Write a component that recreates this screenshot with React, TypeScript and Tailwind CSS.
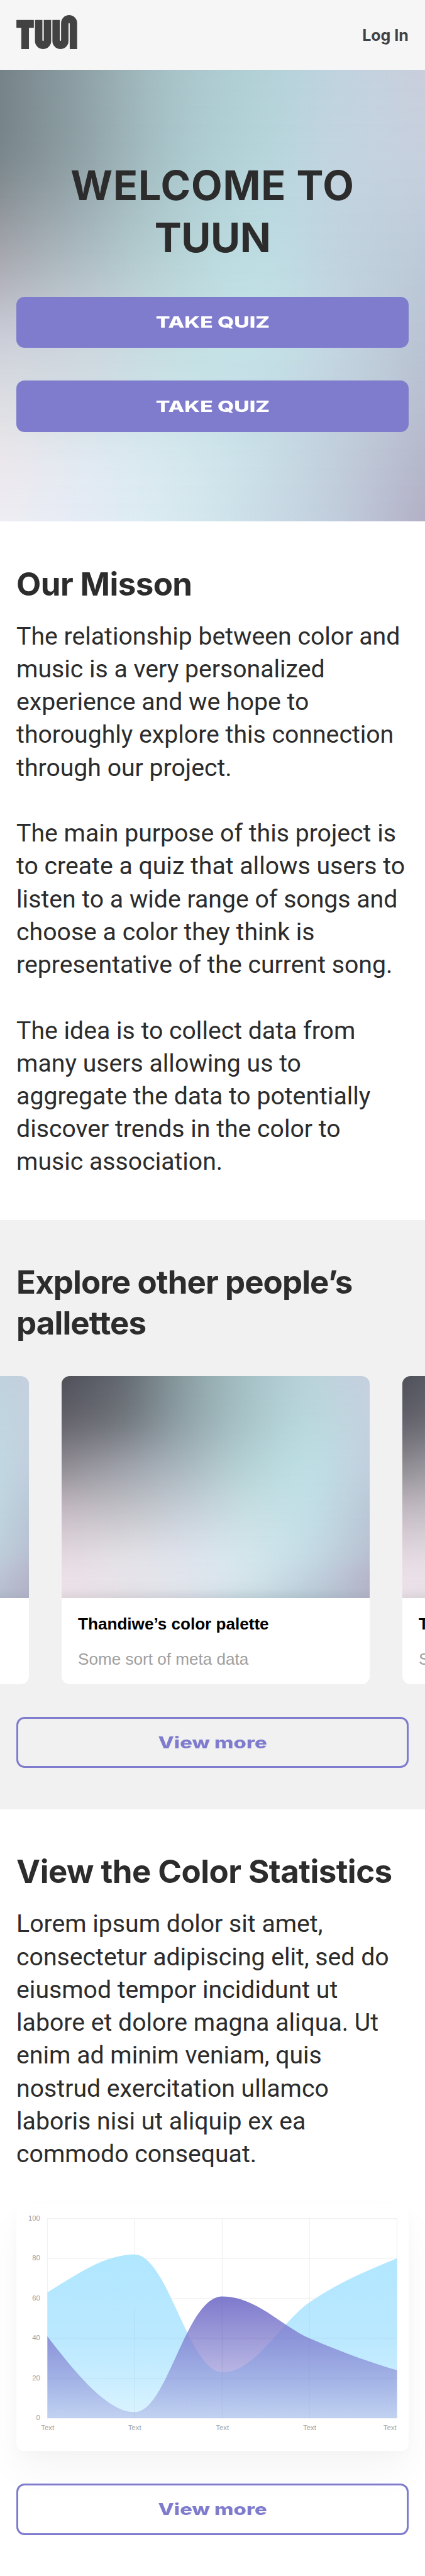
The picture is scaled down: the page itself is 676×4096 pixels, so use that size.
import React from "react";

type MeshRow = { at: number; colors: string[] };
type Rgb = number[];

const heroMesh: MeshRow[] = [
  { at: 0, colors: ["#768389", "#8fa2a7", "#a7c2c7", "#b2d0d6", "#c0d3df", "#cacedc"] },
  { at: 20, colors: ["#7c888d", "#93a5aa", "#a9c5ca", "#b5d4da", "#c2d4e0", "#c6cfdd"] },
  { at: 40, colors: ["#a4a5ad", "#abbbc1", "#b6d1d5", "#bddce2", "#c0d3df", "#becad9"] },
  { at: 60, colors: ["#ccced8", "#cbd5dc", "#c5dde1", "#c3e1e6", "#c2d4e0", "#b9c3d3"] },
  { at: 75, colors: ["#dedfe3", "#d3dfe5", "#cbe3e8", "#c5dde6", "#c1d1de", "#b8becf"] },
  { at: 87, colors: ["#ebe7ec", "#e1e9f1", "#d6e8ee", "#cadfe7", "#c1cddb", "#b5b7cb"] },
  { at: 100, colors: ["#eeedf2", "#e4ebf5", "#d8eaf0", "#cbdde7", "#c0cbdb", "#b3b0c6"] },
];

const cardMesh: MeshRow[] = [
  { at: 0, colors: ["#4f5059", "#656b73", "#8a9da1", "#a5c0c5", "#b9d2d9", "#c5d0df"] },
  { at: 20, colors: ["#65636d", "#747980", "#91a3a9", "#a9c4c9", "#b9d7dc", "#c4d1df"] },
  { at: 40, colors: ["#8f8b92", "#9c9fa8", "#a9b7be", "#b5d1d5", "#bddde3", "#c2cfde"] },
  { at: 60, colors: ["#c2b8c1", "#c1c1c7", "#c5ced6", "#c6dde1", "#c2dee6", "#bbc8d7"] },
  { at: 80, colors: ["#e2d6de", "#e0dee3", "#dce1ea", "#d2e5eb", "#c4dae4", "#b8c0d1"] },
  { at: 90, colors: ["#ebdfe7", "#e6e3e9", "#e0e4ec", "#d3e4ea", "#c1d2df", "#b6b6ca"] },
  { at: 96, colors: ["#ebdfe7", "#e3e0e5", "#dde1e9", "#cedee5", "#bccdd9", "#b3b3c8"] },
  { at: 100, colors: ["#ddd3da", "#d5d2d7", "#cdd1db", "#bdced6", "#aebfcb", "#abacc1"] },
];

const toRgb = (hex: string): Rgb => [1, 3, 5].map((i) => parseInt(hex.slice(i, i + 2), 16));
const toCss = (c: Rgb) =>
  `rgb(${c.map((v) => Math.max(0, Math.min(255, v)).toFixed(1)).join(" ")})`;

/* Cubic Hermite interpolation through unevenly spaced colour stops. */
function sample(stops: number[], values: Rgb[], at: number): Rgb {
  const last = stops.length - 1;
  let i = 0;
  while (i < last - 1 && at > stops[i + 1]) i++;
  const span = stops[i + 1] - stops[i];
  const t = (at - stops[i]) / span;
  const slope = (k: number, ch: number) => {
    const a = Math.max(0, k - 1);
    const b = Math.min(last, k + 1);
    return (values[b][ch] - values[a][ch]) / (stops[b] - stops[a]);
  };
  return [0, 1, 2].map((ch) => {
    const p0 = values[i][ch];
    const p1 = values[i + 1][ch];
    const m0 = slope(i, ch) * span;
    const m1 = slope(i + 1, ch) * span;
    const t2 = t * t;
    const t3 = t2 * t;
    return (
      (2 * t3 - 3 * t2 + 1) * p0 + (t3 - 2 * t2 + t) * m0 + (-2 * t3 + 3 * t2) * p1 + (t3 - t2) * m1
    );
  });
}

function smooth(rows: MeshRow[], rowCount: number, columnCount: number) {
  const ys = rows.map((r) => r.at);
  const grid = rows.map((r) => r.colors.map(toRgb));
  const xs = rows[0].colors.map((_, i) => (100 * i) / (rows[0].colors.length - 1));
  return Array.from({ length: rowCount }, (_, r) => {
    const y = (100 * r) / (rowCount - 1);
    const line = xs.map((_, c) => sample(ys, grid.map((g) => g[c]), y));
    const colors = Array.from({ length: columnCount }, (_, c) =>
      toCss(sample(xs, line, (100 * c) / (columnCount - 1))),
    );
    return { at: y, colors };
  });
}

/* Blends rows of horizontal gradients into each other from top to bottom. */
function ColorMesh({ rows }: { rows: MeshRow[] }) {
  const fine = smooth(rows, 26, 21);
  return (
    <div className="absolute inset-0">
      {fine.map((row, i) => (
        <div
          key={row.at}
          className="absolute inset-0"
          style={{
            backgroundImage: `linear-gradient(to right, ${row.colors.join(", ")})`,
            maskImage:
              i === 0
                ? undefined
                : `linear-gradient(to bottom, transparent ${fine[i - 1].at}%, #000 ${row.at}%)`,
          }}
        />
      ))}
    </div>
  );
}

function Logo() {
  return (
    <svg viewBox="54 44 534 298" className="h-[54px] w-[97px]" fill="#424242" aria-label="TUUN">
      <path d="M57 87H204Q207 87 207 90V153Q207 156 204 156H167Q164 156 164 159V342H97V159Q97 156 94 156H57Q54 156 54 153V90Q54 87 57 87Z" />
      <path d="M217 87H282V265a6 6 0 0 0 12 0V87H359V271a71 71 0 0 1 -142 0Z" />
      <path d="M370 87H435V265a5.5 5.5 0 0 0 11 0V115a70.5 70.5 0 0 1 141 0V342H522V120a5.5 5.5 0 0 0 -11 0V271.500a70.5 70.5 0 0 1 -141 0Z" />
    </svg>
  );
}

function Lines({ lines }: { lines: string[] }) {
  return (
    <p className="font-['Roboto',sans-serif] text-[39.2px] leading-[52.24px] text-[#2c2c2c]">
      {lines.map((line, i) => (
        <span key={i} className="block min-h-[52.24px] whitespace-nowrap">
          {line}
        </span>
      ))}
    </p>
  );
}

function QuizButton() {
  return (
    <button className="flex h-[81.6px] w-full items-center justify-center rounded-[13px] bg-[#7f7cce]">
      <span className="inline-block scale-x-[1.345] text-[25px] leading-none font-extrabold whitespace-nowrap text-white">
        TAKE QUIZ
      </span>
    </button>
  );
}

function ViewMoreButton() {
  return (
    <button className="flex h-[81.6px] w-full items-center justify-center rounded-[13px] border-[3.3px] border-[#7f7cce]">
      <span className="inline-block scale-x-[1.29] text-[25.500px] leading-none font-extrabold whitespace-nowrap text-[#7f7cce]">
        View more
      </span>
    </button>
  );
}

function PaletteCard() {
  return (
    <article className="w-[489.8px] shrink-0 overflow-hidden rounded-[13px] bg-white font-['Liberation_Sans',sans-serif]">
      <div className="relative h-[352.7px]">
        <ColorMesh rows={cardMesh} />
      </div>
      <div className="h-[137px] px-[26.1px] pt-[26px]">
        <h3 className="text-[26.1px] leading-[30px] font-bold whitespace-nowrap text-black">
          Thandiwe’s color palette
        </h3>
        <p className="mt-[26px] text-[26.1px] leading-[30px] whitespace-nowrap text-[#a0a0a0]">
          Some sort of meta data
        </p>
      </div>
    </article>
  );
}

const columns = [90.6, 345, 601.5, 856.5, 1112.4];
const ticks = [0, 20, 40, 60, 80, 100];
const toY = (value: number) => 625 - value * 5.836;

function StatsChart() {
  return (
    <svg viewBox="0 0 1146 720" className="h-full w-full">
      <defs>
        <linearGradient id="sky" gradientUnits="userSpaceOnUse" x1="0" y1="146" x2="0" y2="625">
          <stop offset="0" stopColor="#b0e7ff" />
          <stop offset="0.5" stopColor="#bae8ff" />
          <stop offset="0.75" stopColor="#c8edff" />
          <stop offset="1" stopColor="#dcf4ff" />
        </linearGradient>
        <linearGradient id="violet" gradientUnits="userSpaceOnUse" x1="0" y1="269" x2="0" y2="625">
          <stop offset="0" stopColor="#7e7acd" />
          <stop offset="1" stopColor="#7e7acd" stopOpacity="0.28" />
        </linearGradient>
      </defs>
      <g stroke="#f1f1f1" strokeWidth="2.4" strokeLinecap="round">
        {columns.map((x) => (
          <line key={x} x1={x} x2={x} y1="41.4" y2="625" />
        ))}
        {ticks.map((t) => (
          <line key={t} x1="90.6" x2="1112.4" y1={toY(t)} y2={toY(t)} />
        ))}
      </g>
      <path
        fill="url(#sky)"
        d="M90.600 257.300C176 205 258 146.400 345 146.400C442 146.400 504 490.800 601.500 490.800C700 490.800 771.500 345 856.500 286.500C941 228 1027 193 1112.400 158.100V625H90.600Z"
      />
      <path
        fill="url(#violet)"
        d="M90.600 385.700C176 497 268 607.500 345 607.500C442 607.500 495 269 601.500 269C700 269 771 352 856.500 391.600C941 427 1027 460 1112.400 484.900V625H90.600Z"
      />
      <g stroke="#606080" strokeOpacity="0.07" strokeWidth="2">
        <line x1="345" x2="345" y1="300" y2="625" />
        <line x1="601.5" x2="601.5" y1="270" y2="625" />
        <line x1="856.5" x2="856.5" y1="288" y2="625" />
        <line x1="91" x2="1112" y1={toY(40)} y2={toY(40)} />
        <line x1="91" x2="1112" y1={toY(20)} y2={toY(20)} />
      </g>
      <g className="font-['Liberation_Sans',sans-serif]" fontSize="21" fill="#a0a0a0">
        {ticks.map((t) => (
          <text key={t} x="69.500" y={toY(t) + 6} textAnchor="end">
            {t}
          </text>
        ))}
        {columns.map((x, i) => (
          <text key={x} x={i === 4 ? 1111 : x + 0.5} y="660" textAnchor={i === 4 ? "end" : "middle"}>
            Text
          </text>
        ))}
      </g>
    </svg>
  );
}

const heading = "text-[51px] leading-[65.3px] font-bold text-[#2c2c2c] whitespace-nowrap";

export default function App() {
  return (
    <div className="flex h-[4096px] w-[676px] flex-col overflow-hidden bg-white font-['Inter',sans-serif]">
      <header className="flex h-[111px] shrink-0 items-start justify-between bg-[#f6f6f6] px-[26.1px]">
        <div className="pt-[24.3px]">
          <Logo />
        </div>
        <a className="pt-[41px] text-[25px] leading-[30px] font-bold whitespace-nowrap text-[#424242]">
          Log In
        </a>
      </header>

      <section className="relative h-[718.3px] shrink-0">
        <ColorMesh rows={heroMesh} />
        <div className="relative flex flex-col px-[26.1px] pt-[142.5px]">
          <h1 className="text-center text-[64.4px] leading-[83.3px] font-bold text-[#2c2c2c]">
            <span className="tracking-[0.9px]">WELCOME TO</span>
            <br />
            <span className="tracking-[-0.4px]">TUUN</span>
          </h1>
          <div className="mt-[51.6px] flex flex-col gap-[52.2px]">
            <QuizButton />
            <QuizButton />
          </div>
        </div>
      </section>

      <section className="h-[1110.4px] shrink-0 px-[26.1px] pt-[66.6px]">
        <h2 className={`${heading} tracking-[-0.6px]`}>Our Misson</h2>
        <div className="mt-[24.500px]">
          <Lines
            lines={[
              "The relationship between color and",
              "music is a very personalized",
              "experience and we hope to",
              "thoroughly explore this connection",
              "through our project.",
              "",
              "The main purpose of this project is",
              "to create a quiz that allows users to",
              "listen to a wide range of songs and",
              "choose a color they think is",
              "representative of the current song.",
              "",
              "The idea is to collect data from",
              "many users allowing us to",
              "aggregate the data to potentially",
              "discover trends in the color to",
              "music association.",
            ]}
          />
        </div>
      </section>

      <section className="h-[937px] shrink-0 overflow-hidden bg-[#f1f1f1] pt-[66.2px]">
        <h2 className={`${heading} px-[26.1px] tracking-[-0.93px]`}>
          Explore other people’s
          <br />
          pallettes
        </h2>
        <div className="mt-[51.500px] flex justify-center gap-[52.2px] pl-[9.8px]">
          <PaletteCard />
          <PaletteCard />
          <PaletteCard />
        </div>
        <div className="mt-[52.2px] px-[26.1px]">
          <ViewMoreButton />
        </div>
      </section>

      <section className="grow px-[26.1px] pt-[66.5px]">
        <h2 className={`${heading} tracking-[-0.54px]`}>View the Color Statistics</h2>
        <div className="mt-[25px]">
          <Lines
            lines={[
              "Lorem ipsum dolor sit amet,",
              "consectetur adipiscing elit, sed do",
              "eiusmod tempor incididunt ut",
              "labore et dolore magna aliqua. Ut",
              "enim ad minim veniam, quis",
              "nostrud exercitation ullamco",
              "laboris nisi ut aliquip ex ea",
              "commodo consequat.",
            ]}
          />
        </div>
        <div className="mt-[53.8px] h-[391.8px] rounded-[11px] bg-white shadow-[0_33px_65px_rgba(0,0,0,0.04),0_8px_20px_rgba(0,0,0,0.02)]">
          <StatsChart />
        </div>
        <div className="relative mt-[52.2px]">
          <ViewMoreButton />
        </div>
      </section>
    </div>
  );
}
